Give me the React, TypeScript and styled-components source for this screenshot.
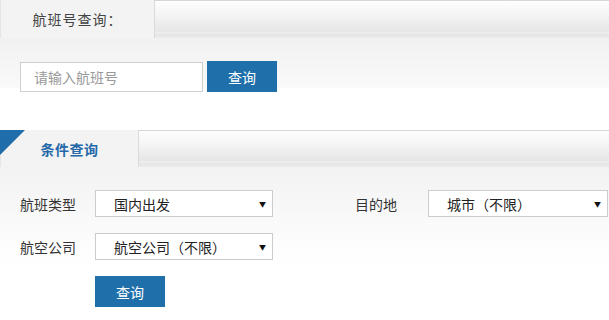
import styled, { createGlobalStyle } from "styled-components";

const GlobalStyle = createGlobalStyle`
  body {
    margin: 0;
    background: #fff;
    font-family: "Microsoft YaHei", "Noto Sans CJK SC", "Noto Sans", sans-serif;
    font-size: 14px;
    color: #333;
  }
`;

const Page = styled.div`
  width: 609px;
  height: 320px;
  overflow: hidden;
  display: flex;
  flex-direction: column;
  gap: 42px;
`;

const Panel = styled.section`
  display: flex;
  flex-direction: column;
`;

const TabBar = styled.div<{ $h: number }>`
  display: flex;
  height: ${(p) => p.$h}px;
  border-top: 1px solid #d6d6d6;
  box-sizing: border-box;
  background: linear-gradient(
    #fdfdfd 0%,
    #f8f8f8 25%,
    #e6e6e6 82%,
    #efefef 86%,
    #e4e4e4 92%,
    #ededed 100%
  );
`;

const Tab = styled.div<{ $w: number; $accent?: boolean }>`
  position: relative;
  width: ${(p) => p.$w}px;
  margin-top: -1px;
  box-sizing: border-box;
  background: #f3f3f3;
  border-left: 1px solid #e6e6e6;
  border-right: 1px solid #dadada;
  display: flex;
  align-items: center;
  justify-content: center;
  font-size: 14px;
  color: ${(p) => (p.$accent ? "#2468a9" : "#444")};
  font-weight: ${(p) => (p.$accent ? "bold" : "normal")};
  letter-spacing: ${(p) => (p.$accent ? "0.5px" : "1px")};

  ${(p) =>
    p.$accent &&
    `
    &::before {
      content: "";
      position: absolute;
      left: -1px;
      top: 0;
      border-top: 25px solid #1f6dab;
      border-right: 25px solid transparent;
    }
  `}
`;

const Body = styled.div<{ $h: number }>`
  height: ${(p) => p.$h}px;
  padding: 23px 0 0 20px;
  box-sizing: border-box;
  background: linear-gradient(#f1f1f1, #fafafa);
`;

const SearchBody = styled(Body)`
  display: flex;
  gap: 4px;
  align-items: flex-start;
`;

const FilterBody = styled(Body)`
  background: linear-gradient(#f2f2f2 0px, #fdfdfd 80px, #fff 100px);
  display: flex;
  flex-direction: column;
  gap: 16px;
`;

const TextInput = styled.input`
  width: 183px;
  height: 30px;
  margin-top: 1px;
  box-sizing: border-box;
  border: 1px solid #cfcfcf;
  background: #fff;
  padding: 0 13px;
  font: inherit;
  font-size: 14px;
  color: #333;
  outline: none;

  &::placeholder {
    color: #999;
  }
`;

const Button = styled.button`
  width: 70px;
  height: 31px;
  border: none;
  background: #1f6fab;
  color: #fff;
  font: inherit;
  font-size: 14px;
  cursor: pointer;
  padding: 0;
`;

const Row = styled.div`
  display: flex;
  align-items: center;
`;

const Label = styled.label<{ $w: number; $ml?: number }>`
  width: ${(p) => p.$w}px;
  margin-left: ${(p) => p.$ml ?? 0}px;
  font-size: 14px;
  color: #333;
`;

const SelectBox = styled.div<{ $w: number }>`
  width: ${(p) => p.$w}px;
  height: 27px;
  box-sizing: border-box;
  border: 1px solid #cccccc;
  background: #fff;
  display: flex;
  align-items: center;
  justify-content: space-between;
  padding: 0 6px 0 18px;
  font-size: 14px;
  color: #222;
`;

const Arrow = styled.span`
  font-size: 7px;
  color: #111;
`;

const ButtonRow = styled.div`
  padding-left: 75px;
`;

const Select = ({ w, value }: { w: number; value: string }) => (
  <SelectBox $w={w}>
    <span>{value}</span>
    <Arrow>▼</Arrow>
  </SelectBox>
);

const App = () => {
  return (
    <>
      <GlobalStyle />
      <Page>
        <Panel>
          <TabBar $h={38}>
            <Tab $w={155}>航班号查询：</Tab>
          </TabBar>
          <SearchBody $h={50}>
            <TextInput placeholder="请输入航班号" />
            <Button>查询</Button>
          </SearchBody>
        </Panel>

        <Panel>
          <TabBar $h={37}>
            <Tab $w={139} $accent>
              条件查询
            </Tab>
          </TabBar>
          <FilterBody $h={153}>
            <Row>
              <Label $w={75}>航班类型</Label>
              <Select w={178} value="国内出发" />
              <Label $w={73} $ml={82}>
                目的地
              </Label>
              <Select w={180} value="城市（不限）" />
            </Row>
            <Row>
              <Label $w={75}>航空公司</Label>
              <Select w={178} value="航空公司（不限）" />
            </Row>
            <ButtonRow>
              <Button>查询</Button>
            </ButtonRow>
          </FilterBody>
        </Panel>
      </Page>
    </>
  );
};

export default App;
